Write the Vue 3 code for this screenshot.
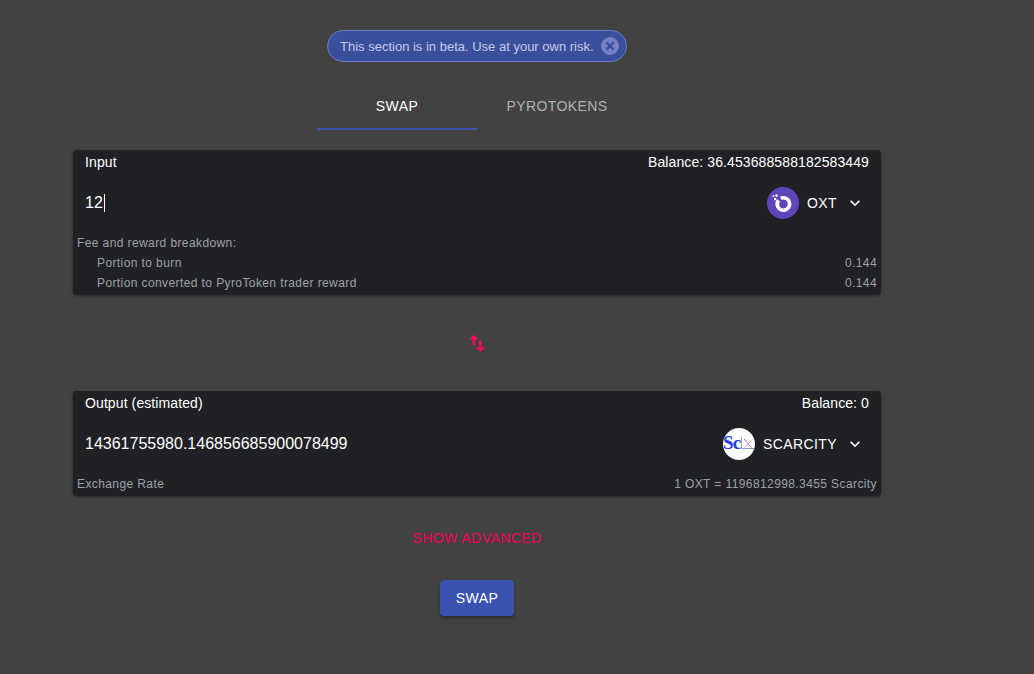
<script setup>
const inputRows = [
  { label: 'Portion to burn', value: '0.144' },
  { label: 'Portion converted to PyroToken trader reward', value: '0.144' }
]
</script>

<template>
  <div class="page">
    <div class="alert">
      <span>This section is in beta. Use at your own risk.</span>
      <svg class="alert-close" width="22" height="22" viewBox="0 0 22 22">
        <circle cx="11" cy="11" r="9" fill="#7581c4" />
        <path d="M7.4 7.4l7.2 7.2M14.6 7.4l-7.2 7.2" stroke="#3a4f9c" stroke-width="2.2" fill="none" />
      </svg>
    </div>

    <div class="tabs">
      <div class="tab active">SWAP</div>
      <div class="tab">PYROTOKENS</div>
    </div>

    <!-- Input card -->
    <div class="card">
      <div class="card-head">
        <span>Input</span>
        <span>Balance: 36.453688588182583449</span>
      </div>
      <div class="card-main">
        <div class="amount">12<i class="caret"></i></div>
        <div class="token">
          <svg class="token-logo" width="32" height="32" viewBox="0 0 32 32">
            <circle cx="16" cy="16" r="16" fill="#5f45ba" />
            <circle cx="16.4" cy="17" r="6.2" fill="none" stroke="#fff" stroke-width="3.6"
              stroke-dasharray="35 4" transform="rotate(244.5 16.4 17)" />
            <rect x="5.5" y="8" width="2" height="2" fill="#cfc7ee" />
            <rect x="8.5" y="7.5" width="2.2" height="2.2" fill="#fff" />
            <rect x="7" y="11" width="2.2" height="2.2" fill="#fff" />
          </svg>
          <span>OXT</span>
          <svg class="chevron" width="20" height="20" viewBox="0 0 24 24">
            <path d="M7.41 8.59 12 13.17l4.59-4.58L18 10l-6 6-6-6z" fill="#fff" />
          </svg>
        </div>
      </div>
      <div class="details">
        <div class="detail-title">Fee and reward breakdown:</div>
        <div v-for="row in inputRows" :key="row.label" class="detail-row indented">
          <span>{{ row.label }}</span>
          <span>{{ row.value }}</span>
        </div>
      </div>
    </div>

    <div class="switch">
      <svg width="16" height="20" viewBox="0 0 16 20">
        <path d="M4.9 1.8.4 6.6h3.2v6h2.6v-6h3.2z" fill="#fb0a5c" />
        <path d="M11.3 19l4.5-4.8h-3.2V8h-2.6v6.2H6.8z" fill="#fb0a5c" />
      </svg>
    </div>

    <!-- Output card -->
    <div class="card">
      <div class="card-head">
        <span>Output (estimated)</span>
        <span>Balance: 0</span>
      </div>
      <div class="card-main">
        <div class="amount">14361755980.146856685900078499</div>
        <div class="token">
          <svg class="token-logo" width="32" height="32" viewBox="0 0 32 32">
            <circle cx="16" cy="16" r="16" fill="#fff" />
            <path d="M18.5 9v11.5H31" stroke="#8f9aa8" stroke-width="1" fill="none" />
            <path d="M21 11l7.5 8.5" stroke="#d0707c" stroke-width="1" fill="none" />
            <path d="M21 19.5l7.5-7" stroke="#b9a4c4" stroke-width="1" fill="none" />
            <text x="0" y="21" class="scarcity-mark">Sc</text>
          </svg>
          <span>SCARCITY</span>
          <svg class="chevron" width="20" height="20" viewBox="0 0 24 24">
            <path d="M7.41 8.59 12 13.17l4.59-4.58L18 10l-6 6-6-6z" fill="#fff" />
          </svg>
        </div>
      </div>
      <div class="details">
        <div class="detail-row">
          <span>Exchange Rate</span>
          <span>1 OXT = 1196812998.3455 Scarcity</span>
        </div>
      </div>
    </div>

    <div class="advanced">SHOW ADVANCED</div>
    <button class="swap-btn">SWAP</button>
  </div>
</template>

<style>
html, body {
  background: #424242;
}
</style>

<style scoped>
.page {
  box-sizing: border-box;
  width: 808px;
  height: 674px;
  margin-left: 73px;
  padding-top: 30px;
  display: flex;
  flex-direction: column;
  align-items: center;
  font-family: "Liberation Sans", Arial, sans-serif;
  color: #fff;
}

.alert {
  box-sizing: border-box;
  width: 300px;
  height: 32px;
  padding: 0 5px 0 12px;
  display: flex;
  align-items: center;
  justify-content: space-between;
  background: #3a4f9c;
  border: 1px solid #6d7cc0;
  border-radius: 16px;
  font-size: 13px;
  color: #c5cae9;
}

.tabs {
  display: flex;
  margin-top: 20px;
}

.tab {
  box-sizing: border-box;
  width: 160px;
  height: 48px;
  display: flex;
  align-items: center;
  justify-content: center;
  font-size: 14px;
  letter-spacing: 0.4px;
  color: #b3b3b3;
}

.tab.active {
  padding-top: 2px;
  color: #fff;
  border-bottom: 2px solid #3a52b0;
}

.card {
  align-self: stretch;
  background: #202125;
  border-radius: 4px;
  box-shadow: 0 1px 3px rgba(0, 0, 0, 0.4);
}

.tabs + .card {
  margin-top: 20px;
}

.card-head {
  display: flex;
  justify-content: space-between;
  padding: 3px 12px 0;
  height: 22px;
  font-size: 14px;
  letter-spacing: 0.1px;
  line-height: 18px;
}

.card-main {
  box-sizing: border-box;
  height: 58px;
  padding: 0 16px 2px 12px;
  display: flex;
  align-items: center;
  justify-content: space-between;
}

.amount {
  display: flex;
  align-items: center;
  margin-top: -1px;
  font-size: 16px;
}

.caret {
  width: 1px;
  height: 18px;
  margin-left: 1px;
  background: #fff;
}

.token {
  display: flex;
  align-items: center;
  font-size: 14px;
  letter-spacing: 0.4px;
}

.token-logo {
  margin-right: 8px;
}

.chevron {
  margin-left: 8px;
}

.scarcity-mark {
  font-family: "Liberation Serif", serif;
  font-weight: bold;
  font-size: 19px;
  letter-spacing: -0.8px;
  fill: #1a3fe6;
}

.details {
  padding: 0 4px 2px;
  font-size: 12px;
  letter-spacing: 0.4px;
  line-height: 20px;
  color: #9ea1a6;
}

.detail-row {
  display: flex;
  justify-content: space-between;
}

.indented {
  padding-left: 20px;
}

.switch {
  height: 96px;
  display: flex;
  align-items: center;
  justify-content: center;
}

.advanced {
  margin-top: 32px;
  font-size: 14px;
  letter-spacing: 0.45px;
  line-height: 20px;
  color: #f50057;
}

.swap-btn {
  box-sizing: border-box;
  width: 74px;
  height: 36px;
  margin-top: 32px;
  border: 0;
  border-radius: 4px;
  background: #3a52b0;
  color: #fff;
  font: inherit;
  font-size: 14px;
  letter-spacing: 0.4px;
  box-shadow: 0 2px 3px rgba(0, 0, 0, 0.35);
}
</style>
